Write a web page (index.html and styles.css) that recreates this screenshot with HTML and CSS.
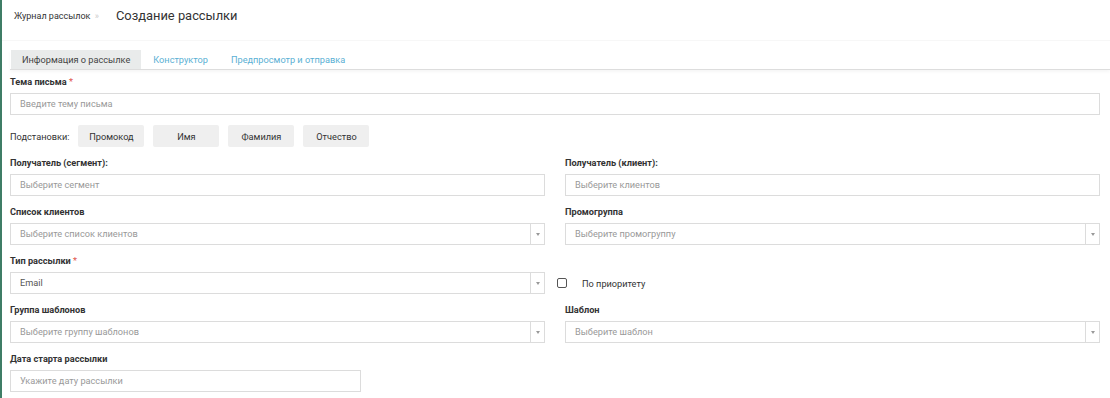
FILE: index.html
```html
<!DOCTYPE html>
<html lang="ru">
<head>
  <meta charset="UTF-8">
  <meta name="viewport" content="width=device-width, initial-scale=1.0">
  <title>Создание рассылки</title>
  <link rel="stylesheet" href="styles.css">
</head>
<body>

  <div class="page-header">
    <span class="crumb">Журнал рассылок <span class="crumb-sep">»</span></span>
    <h1>Создание рассылки</h1>
  </div>

  <div class="page">
    <div class="tabs">
      <div class="tab active">Информация о рассылке</div>
      <div class="tab">Конструктор</div>
      <div class="tab">Предпросмотр и отправка</div>
    </div>

    <form class="mailing-form">
      <div class="field">
        <label>Тема письма <span class="req">*</span></label>
        <div class="input">Введите тему письма</div>
      </div>

      <div class="subs">
        <span class="subs-label">Подстановки:</span>
        <button type="button">Промокод</button>
        <button type="button">Имя</button>
        <button type="button">Фамилия</button>
        <button type="button">Отчество</button>
      </div>

      <div class="grid">
        <div class="field">
          <label>Получатель (сегмент):</label>
          <div class="input">Выберите сегмент</div>
        </div>
        <div class="field">
          <label>Получатель (клиент):</label>
          <div class="input">Выберите клиентов</div>
        </div>

        <div class="field">
          <label>Список клиентов</label>
          <div class="input select">
            <span class="value">Выберите список клиентов</span>
            <span class="arrow"></span>
          </div>
        </div>
        <div class="field">
          <label>Промогруппа</label>
          <div class="input select">
            <span class="value">Выберите промогруппу</span>
            <span class="arrow"></span>
          </div>
        </div>

        <div class="field">
          <label>Тип рассылки <span class="req">*</span></label>
          <div class="input select filled">
            <span class="value">Email</span>
            <span class="arrow"></span>
          </div>
        </div>
        <div class="field check-cell">
          <div class="check-row">
            <span class="checkbox"></span>
            <span>По приоритету</span>
          </div>
        </div>

        <div class="field">
          <label>Группа шаблонов</label>
          <div class="input select">
            <span class="value">Выберите группу шаблонов</span>
            <span class="arrow"></span>
          </div>
        </div>
        <div class="field">
          <label>Шаблон</label>
          <div class="input select">
            <span class="value">Выберите шаблон</span>
            <span class="arrow"></span>
          </div>
        </div>

        <div class="field">
          <label>Дата старта рассылки</label>
          <div class="input date">Укажите дату рассылки</div>
        </div>
      </div>
    </form>
  </div>

</body>
</html>
```

FILE: styles.css
```css
body {
  font-family: Roboto, "Liberation Sans", Arial, sans-serif;
  font-size: 9.2px;
  color: #333;
  background-color: #fff;
  margin: 0;
  border-left: 2px solid #3f7d66;
  min-height: 100vh;
  box-sizing: border-box;
}

.page-header {
  display: flex;
  align-items: center;
  padding: 0 0 10px 12px;
  height: 30px;
  border-bottom: 1px solid #f7f7f7;
}

.crumb {
  font-size: 9px;
  color: #333;
  margin-right: 17px;
  margin-top: 2px;
}

.crumb-sep {
  color: #ccc;
  margin-left: 2px;
}

h1 {
  font-size: 12.9px;
  font-weight: 400;
  color: #333;
  margin: 0;
}

.page {
  padding: 9px 10px 0 8px;
}

.tabs {
  display: flex;
  height: 19px;
  margin-right: -10px;
  padding-left: 1px;
  border-bottom: 1px solid #ddd;
  box-shadow: 0 2px 3px rgba(0, 0, 0, 0.04);
}

.tab {
  padding: 0 11px;
  line-height: 19px;
  color: #5ab0d4;
  margin-right: 1px;
}

.tab.active {
  background-color: #e9ebeb;
  color: #444;
}

.mailing-form {
  padding-top: 6px;
}

.grid {
  display: grid;
  grid-template-columns: 1fr 1fr;
  column-gap: 20px;
}

.field {
  margin-bottom: 10px;
}

.field label {
  display: block;
  font-weight: 700;
  line-height: 12px;
  margin-bottom: 5px;
  color: #333;
}

.req {
  color: #e0534a;
  font-weight: 400;
}

.input {
  height: 22px;
  box-sizing: border-box;
  border: 1px solid #dcdcdc;
  padding: 0 9px;
  line-height: 20px;
  color: #999;
  background-color: #fff;
}

.select {
  display: flex;
  padding-right: 0;
}

.select .value {
  flex: 1;
}

.select.filled .value {
  color: #555;
}

.arrow {
  width: 13px;
  border-left: 1px solid #dcdcdc;
  display: flex;
  align-items: center;
  justify-content: center;
}

.arrow::after {
  content: "";
  border-left: 2.5px solid transparent;
  border-right: 2.5px solid transparent;
  border-top: 3px solid #999;
}

.date {
  width: 351px;
}

.subs {
  display: flex;
  align-items: center;
  margin-bottom: 10px;
}

.subs-label {
  margin-right: 9px;
}

.subs button {
  font-family: inherit;
  font-size: 9.2px;
  color: #333;
  width: 66px;
  height: 22px;
  background-color: #efefef;
  border: none;
  border-radius: 2px;
  margin-right: 9px;
  padding: 0;
}

.check-cell {
  display: flex;
  align-items: flex-end;
}

.check-row {
  display: flex;
  align-items: center;
  height: 22px;
  margin-left: -8px;
}

.checkbox {
  width: 8px;
  height: 8px;
  border: 1px solid #555;
  border-radius: 2px;
  margin-right: 15px;
}
```
